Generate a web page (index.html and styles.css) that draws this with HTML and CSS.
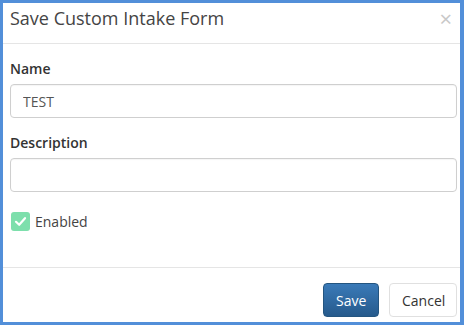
FILE: index.html
```html
<!DOCTYPE html>
<html lang="en">
<head>
  <meta charset="UTF-8" />
  <title>Save Custom Intake Form</title>
  <link rel="stylesheet" href="styles.css">
</head>
<body>
  <div class="modal">
    <div class="modal-header">
      <h4 class="modal-title">Save Custom Intake Form</h4>
      <span class="close">&times;</span>
    </div>
    <div class="modal-body">
      <div class="form-group">
        <label for="name">Name</label>
        <input type="text" id="name" value="TEST" />
      </div>
      <div class="form-group">
        <label for="desc">Description</label>
        <input type="text" id="desc" />
      </div>
      <div class="check-row">
        <span class="check-box">
          <svg width="13" height="13" viewBox="0 0 13 13"><path d="M2 6.8 L5.2 9.8 L11 3.2" fill="none" stroke="#fff" stroke-width="2.2" stroke-linecap="round" stroke-linejoin="round"/></svg>
        </span>
        <span class="check-label">Enabled</span>
      </div>
    </div>
    <div class="modal-footer">
      <button class="btn btn-primary">Save</button>
      <button class="btn btn-default">Cancel</button>
    </div>
  </div>
</body>
</html>
```

FILE: styles.css
```css
html, body {
  margin: 0;
  padding: 0;
}

body {
  font-family: 'Open Sans', sans-serif;
  background: #fff;
}

.modal {
  width: 464px;
  height: 325px;
  box-sizing: border-box;
  border: 3px solid #528fd9;
  border-right-width: 4px;
  background: #fff;
  display: flex;
  flex-direction: column;
  overflow: hidden;
}

.modal-header {
  height: 40px;
  flex-shrink: 0;
  border-bottom: 1px solid #e5e5e5;
  display: flex;
  align-items: center;
  justify-content: space-between;
  padding: 0 8px 0 7px;
}

.modal-title {
  margin: 0;
  font-size: 18px;
  font-weight: normal;
  color: #444;
  line-height: 20px;
  padding-bottom: 11px;
}

.close {
  font-size: 22px;
  color: #c8c8c8;
  line-height: 20px;
  margin-bottom: 10px;
}

.modal-body {
  padding: 15px 3px 0 7px;
  height: 223px;
  flex-shrink: 0;
  box-sizing: border-box;
}

.form-group {
  margin-bottom: 15px;
}

label {
  display: block;
  font-size: 14px;
  font-weight: 600;
  color: #333;
  line-height: 20px;
  margin-bottom: 5px;
}

input {
  width: 100%;
  height: 34px;
  box-sizing: border-box;
  border: 1px solid #cfcfcf;
  border-radius: 4px;
  padding: 6px 12px;
  font-family: 'Open Sans', sans-serif;
  font-size: 14px;
  color: #555;
  box-shadow: inset 0 1px 1px rgba(0, 0, 0, 0.04);
}

.check-row {
  display: flex;
  align-items: center;
  margin-top: 20px;
  padding-left: 1px;
}

.check-box {
  width: 19px;
  height: 19px;
  border-radius: 3px;
  background: #7ddfac;
  display: flex;
  align-items: center;
  justify-content: center;
}

.check-label {
  font-size: 14px;
  color: #444;
  margin-left: 5px;
}

.modal-footer {
  border-top: 1px solid #e5e5e5;
  padding: 15px 3px 0 0;
  display: flex;
  justify-content: flex-end;
  gap: 10px;
}

.btn {
  height: 34px;
  padding: 6px 12px;
  font-family: 'Open Sans', sans-serif;
  font-size: 14px;
  border-radius: 4px;
  cursor: pointer;
}

.btn-primary {
  width: 56px;
  color: #fff;
  background: linear-gradient(#3a7ab8, #265a8c);
  border: 1px solid #245580;
}

.btn-default {
  width: 68px;
  color: #333;
  background: #fff;
  border: 1px solid #e0e0e0;
}
```
